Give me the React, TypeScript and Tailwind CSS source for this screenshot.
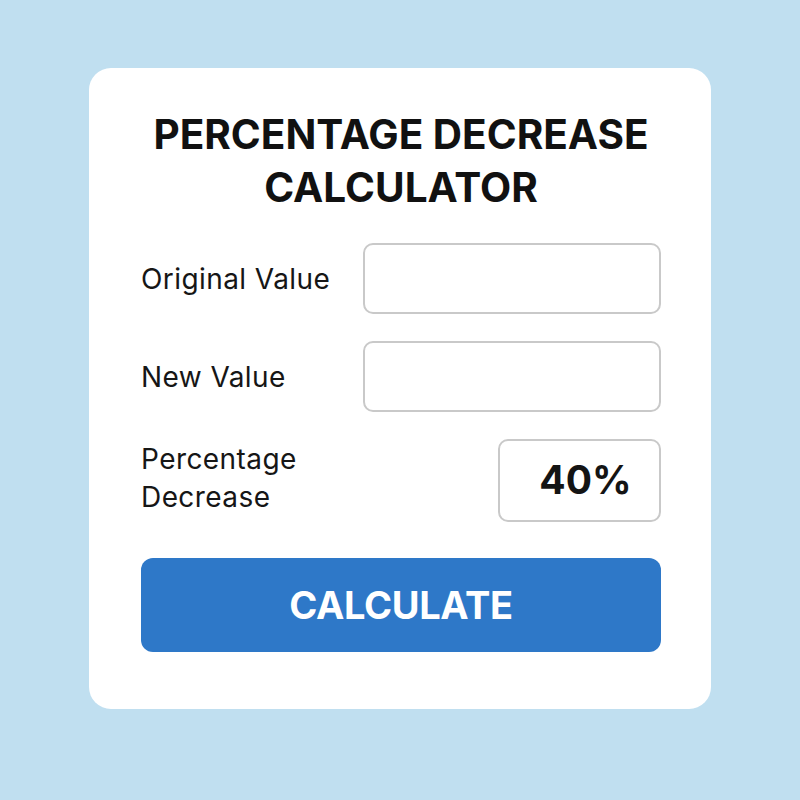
import { useState } from 'react'

interface FieldRowProps {
  label: string
  value: string
  onChange: (v: string) => void
}

function FieldRow({ label, value, onChange }: FieldRowProps) {
  return (
    <div className="flex items-center justify-between">
      <label className="text-[28px] text-[#161616] tracking-[0.015em]">{label}</label>
      <input
        value={value}
        onChange={e => onChange(e.target.value)}
        className="w-[298px] h-[71px] rounded-[10px] border-2 border-[#c9c9c9] bg-white px-4 text-[26px] outline-none"
      />
    </div>
  )
}

export default function App() {
  const [original, setOriginal] = useState('')
  const [next, setNext] = useState('')
  const [result, setResult] = useState('40%')

  const calculate = () => {
    const a = parseFloat(original)
    const b = parseFloat(next)
    if (!isNaN(a) && !isNaN(b) && a !== 0) {
      setResult(`${Math.round(((a - b) / a) * 100)}%`)
    }
  }

  return (
    <div className="min-h-[800px] w-full bg-[#c0dff0] flex items-start justify-center pt-[68px] font-['Inter',sans-serif]">
      <div className="w-[622px] h-[641px] bg-white rounded-[22px] pl-[52px] pr-[50px] pt-[40px]">
        <h1 className="text-center text-[40.5px] leading-[53px] font-bold text-[#111]">
          PERCENTAGE DECREASE
          <br />
          CALCULATOR
        </h1>

        <div className="mt-[29px] flex flex-col gap-[27px]">
          <FieldRow label="Original Value" value={original} onChange={setOriginal} />
          <FieldRow label="New Value" value={next} onChange={setNext} />

          <div className="flex items-start justify-between">
            <div className="pt-[1px] text-[28px] leading-[38px] text-[#161616] tracking-[0.015em]">
              Percentage
              <br />
              Decrease
            </div>
            <div className="w-[163px] h-[83px] rounded-[10px] border-2 border-[#c9c9c9] flex items-center justify-center pl-[12px] text-[39px] font-bold text-[#141414]">
              {result}
            </div>
          </div>
        </div>

        <button
          onClick={calculate}
          className="mt-[36px] w-full h-[94px] rounded-[12px] bg-[#2e78c8] text-white text-[38px] font-bold tracking-[-0.01em]"
        >
          CALCULATE
        </button>
      </div>
    </div>
  )
}
